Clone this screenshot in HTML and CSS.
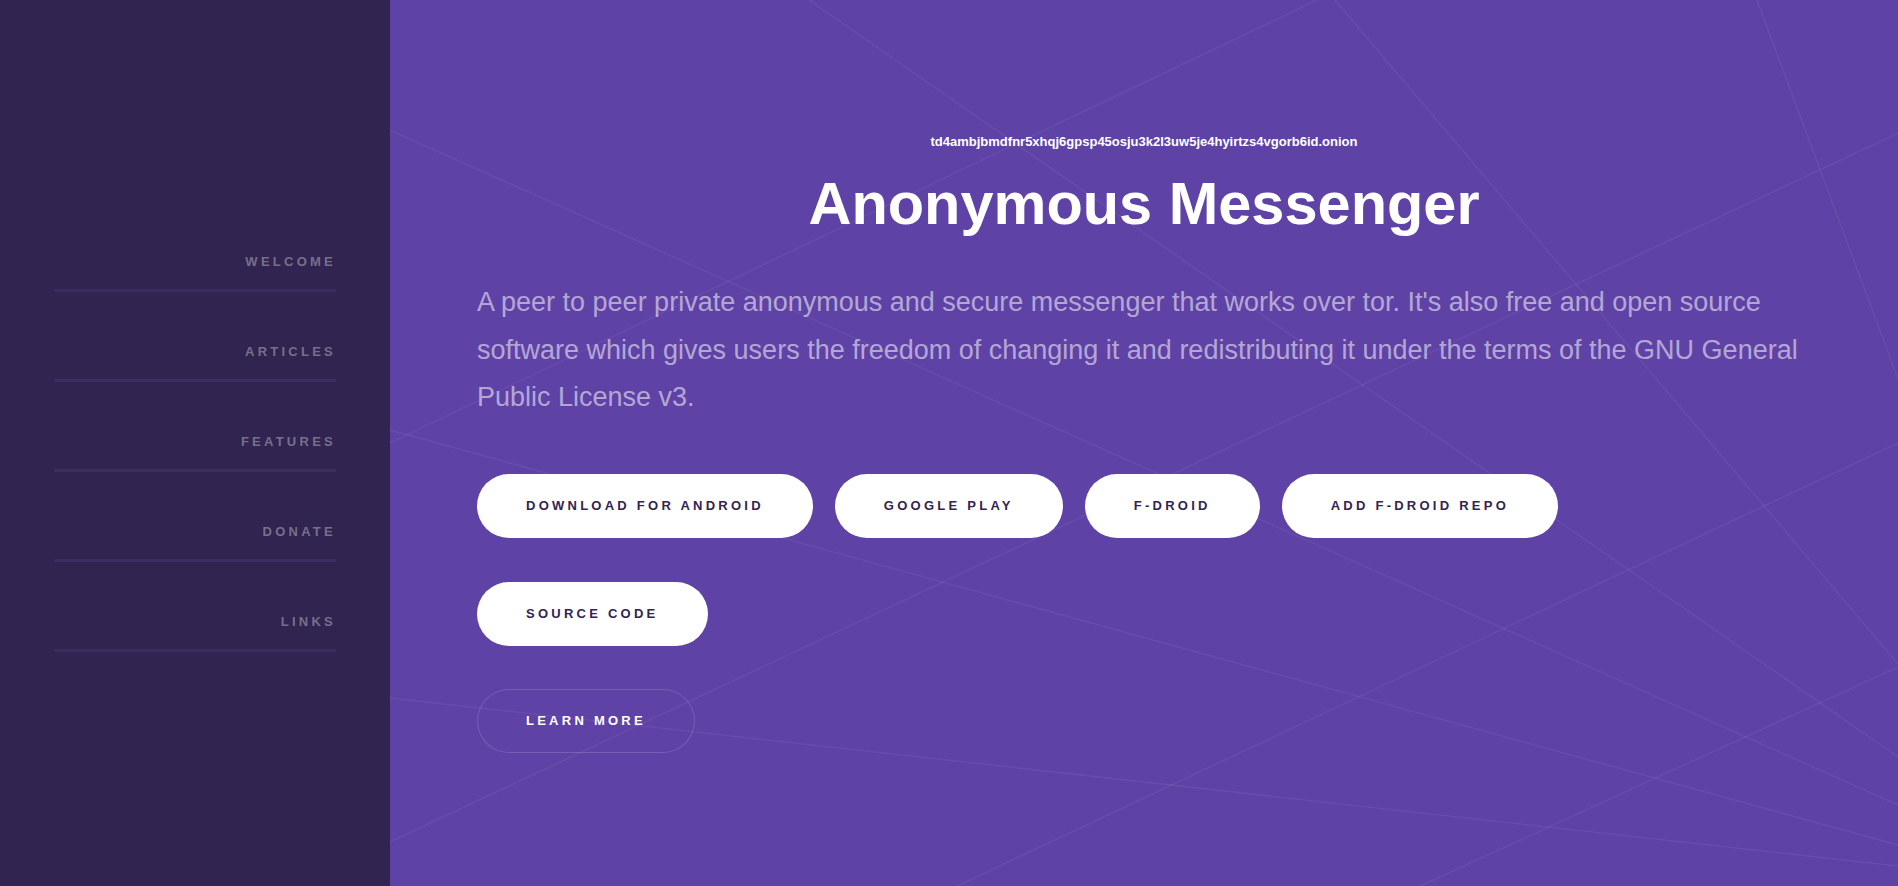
FILE: index.html
```html
<!DOCTYPE html>
<html lang="en">
<head>
    <meta charset="UTF-8">
    <meta name="viewport" content="width=device-width, initial-scale=1.0">
    <title>Anonymous Messenger</title>
    <link rel="stylesheet" href="styles.css">
</head>
<body>
    <div class="page">
        <section id="sidebar">
            <nav>
                <ul>
                    <li><a href="#intro">Welcome</a></li>
                    <li><a href="#articles">Articles</a></li>
                    <li><a href="#features">Features</a></li>
                    <li><a href="#donate">Donate</a></li>
                    <li><a href="#links">Links</a></li>
                </ul>
            </nav>
        </section>

        <section id="intro">
            <!-- background lines -->
            <svg class="lines" viewBox="0 0 1508 886" preserveAspectRatio="none">
                <line x1="419" y1="0" x2="1508" y2="757" />
                <line x1="0" y1="443" x2="927" y2="0" />
                <line x1="0" y1="130" x2="1508" y2="805" />
                <line x1="1367" y1="0" x2="1508" y2="379" />
                <line x1="945" y1="0" x2="1508" y2="664" />
                <line x1="0" y1="842" x2="1508" y2="133" />
                <line x1="567" y1="886" x2="1508" y2="443" />
                <line x1="1030" y1="886" x2="1508" y2="667" />
                <line x1="0" y1="430" x2="1508" y2="845" />
                <line x1="0" y1="698" x2="1508" y2="866" />
            </svg>

            <div class="inner">
                <p class="onion">td4ambjbmdfnr5xhqj6gpsp45osju3k2l3uw5je4hyirtzs4vgorb6id.onion</p>
                <h1>Anonymous Messenger</h1>
                <p class="lead">A peer to peer private anonymous and secure messenger that works over tor. It's also free and open source software which gives users the freedom of changing it and redistributing it under the terms of the GNU General Public License v3.</p>
                <ul class="actions">
                    <li><a href="#" class="button primary">Download for Android</a></li>
                    <li><a href="#" class="button primary">Google Play</a></li>
                    <li><a href="#" class="button primary">F-Droid</a></li>
                    <li><a href="#" class="button primary">Add F-Droid Repo</a></li>
                    <li><a href="#" class="button primary">Source Code</a></li>
                </ul>
                <ul class="actions more">
                    <li><a href="#articles" class="button">Learn more</a></li>
                </ul>
            </div>
        </section>
    </div>
</body>
</html>
```

FILE: styles.css
```css
html, body {
    margin: 0;
    padding: 0;
}
body {
    font-family: "Liberation Sans", Arial, Helvetica, sans-serif;
    background-color: #5e42a6;
    color: #fff;
}
ul {
    list-style: none;
    margin: 0;
    padding: 0;
}
a {
    text-decoration: none;
}
.page {
    display: flex;
    min-height: 100vh;
}

/* sidebar */
#sidebar {
    width: 390px;
    flex-shrink: 0;
    background-color: #312450;
    padding: 202px 54px 0 54px;
    box-sizing: border-box;
}
#sidebar nav a {
    display: block;
    text-align: right;
    font-size: 13px;
    font-weight: bold;
    line-height: 20px;
    letter-spacing: 0.25em;
    text-transform: uppercase;
    color: rgba(255, 255, 255, 0.35);
    padding: 50px 0 17px 0;
    border-bottom: 3px solid #3c2c62;
}

/* intro */
#intro {
    position: relative;
    flex: 1;
    overflow: hidden;
    min-height: 886px;
}
.lines {
    position: absolute;
    top: 0;
    left: 0;
    width: 100%;
    height: 100%;
}
.lines line {
    stroke: #fff;
    stroke-opacity: 0.065;
    stroke-width: 1.3;
}
.inner {
    position: relative;
    padding: 132px 80px 0 87px;
}
.onion {
    margin: 0 0 0 -7px;
    text-align: center;
    font-size: 13px;
    font-weight: bold;
    line-height: 20px;
}
h1 {
    margin: 16px 0 0 -7px;
    text-align: center;
    font-size: 59.5px;
    line-height: 1.2;
    font-weight: bold;
}
.lead {
    margin: 40px 0 0 0;
    font-size: 27px;
    line-height: 1.75;
    color: rgba(255, 255, 255, 0.55);
}
.actions {
    display: flex;
    flex-wrap: wrap;
    gap: 44px 22px;
    max-width: 1300px;
    margin-top: 53px;
}
.actions.more {
    margin-top: 43px;
}
.button {
    display: block;
    height: 64px;
    line-height: 64px;
    padding: 0 49px;
    border-radius: 32px;
    font-size: 13px;
    font-weight: bold;
    letter-spacing: 0.25em;
    text-transform: uppercase;
    color: #fff;
    box-shadow: inset 0 0 0 1px rgba(255, 255, 255, 0.15);
}
.button.primary {
    background-color: #fff;
    color: #312450;
    box-shadow: none;
}
```
